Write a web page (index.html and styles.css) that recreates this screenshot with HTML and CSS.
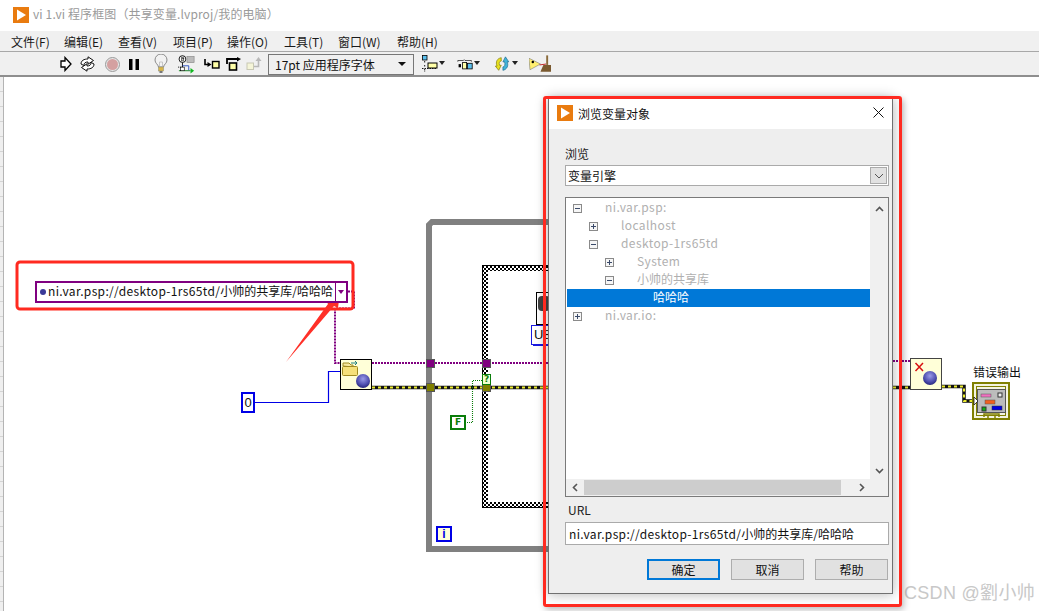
FILE: index.html
```html
<!DOCTYPE html>
<html lang="zh">
<head>
<meta charset="utf-8">
<title>vi 1.vi 程序框图</title>
<link rel="stylesheet" href="styles.css">
</head>
<body>
<div class="window">
  <header class="titlebar">
    <svg class="app-icon" viewBox="0 0 16 16"><rect width="16" height="16" fill="#e97b0f"/><path d="M4 2.500 13 8 4 13.500z" fill="#fff"/></svg>
    <span class="title-text">vi 1.vi 程序框图（共享变量.lvproj/我的电脑）</span>
  </header>
  <nav class="menubar">
    <span class="menu-item">文件(F)</span><span class="menu-item">编辑(E)</span><span class="menu-item">查看(V)</span><span class="menu-item">项目(P)</span><span class="menu-item">操作(O)</span><span class="menu-item">工具(T)</span><span class="menu-item">窗口(W)</span><span class="menu-item">帮助(H)</span>
  </nav>
  <div class="toolbar">
    <svg class="tool t-run" width="12" height="16" viewBox="0 0 12 16"><path d="M1 5h4V1.500L11 8l-6 6.500V11H1z" fill="#fff" stroke="#000" stroke-width="1.300"/></svg>
    <svg class="tool t-cont" width="17" height="16" viewBox="0 0 17 16"><path d="M2 8C2 4.500 5 3 9 3V.8L14.500 4.500 9 8.200V6C6.500 6 5 6.800 4.800 9.500z" fill="#fff" stroke="#111"/><path d="M15 8c0 3.500-3 5-7 5v2.200L2.500 11.500 8 7.800V10c2.500 0 4-.8 4.200-3.500z" fill="#fff" stroke="#111"/></svg>
    <svg class="tool t-abort" width="15" height="15" viewBox="0 0 15 15"><circle cx="7.500" cy="7.500" r="7" fill="#e6e6e6" stroke="#9a9a9a"/><circle cx="7.500" cy="7.500" r="5.500" fill="#d4a0a0"/></svg>
    <svg class="tool t-pause" width="10" height="12" viewBox="0 0 10 12"><rect x="0" y="1" width="3.500" height="11"/><rect x="6.500" y="1" width="3.500" height="11"/></svg>
    <svg class="tool t-bulb" width="14" height="20" viewBox="0 0 14 20"><path d="M4.500 13C4 10 1 9.500 1 6a6 6 0 0 1 12 0c0 3.500-3 4-3.500 7z" fill="#f2f2f2" stroke="#8a8a8a"/><path d="M5.500 13h3V8h-3z" fill="none" stroke="#b5b5b5" stroke-width=".7"/><rect x="4.500" y="13" width="5" height="4" fill="#d9b648" stroke="#887" stroke-width=".5"/><rect x="5.500" y="17" width="3" height="2" fill="#777"/></svg>
    <svg class="tool t-retain" width="17" height="20" viewBox="0 0 19 21"><circle cx="5" cy="5" r="3.800" fill="#fff" stroke="#000"/><path d="M4 3h2v4h-2zM4.500 4.500H7" fill="none" stroke="#000" stroke-width=".7"/><rect x="10" y="2" width="8" height="7" fill="#bbb" stroke="#888" stroke-width=".7"/><path d="M5 9v6" stroke="#000"/><path d="M0 14h5" stroke="#000" stroke-dasharray="1 1"/><path d="M1 18h13" stroke="#0a7d15"/><path d="M5 12.500h7v5" stroke="#224ac0" fill="none"/><rect x="3" y="14" width="4" height="4" fill="#fff" stroke="#000" stroke-width=".7"/><path d="M14 15l4 3-4 3z" fill="#10b820"/></svg>
    <svg class="tool t-into" width="16" height="11" viewBox="0 0 16 11"><path d="M1 0v5.500h4" fill="none" stroke="#000" stroke-width="1.600"/><path d="M3.500 3l4 2.500-4 2.500z"/><rect x="8.500" y="2.500" width="6.500" height="6.500" fill="#ffffa8" stroke="#000" stroke-width="1.400"/></svg>
    <svg class="tool t-over" width="16" height="15" viewBox="0 0 16 15"><path d="M1 7V2h10" fill="none" stroke="#000" stroke-width="1.800"/><path d="M11 0l4 2-4 2.500z"/><rect x="3.500" y="6" width="7" height="7" fill="#ffffa8" stroke="#000" stroke-width="1.600"/></svg>
    <svg class="tool t-out" width="16" height="14" viewBox="0 0 16 14"><rect x="1" y="6" width="6.500" height="6.500" fill="#f5f5d8" stroke="#c8c8b4"/><path d="M8 9.500h4.500V3" fill="none" stroke="#b8b8b8" stroke-width="1.600"/><path d="M9.500 4l3-4 3 4z" fill="#b8b8b8"/></svg>
    <div class="font-select"><span>17pt 应用程序字体</span><i class="arrow-black"></i></div>
    <span class="tool-group t-align"><svg width="16" height="18" viewBox="0 0 16 18"><rect x=".5" y=".5" width="4.500" height="4.500" fill="#5cc0ee" stroke="#000" stroke-width=".8"/><path d="M2.700 6v2M2.700 10v2M2.700 14v3M0 13.500h15" stroke="#000" stroke-width=".9" stroke-dasharray="1.500 1"/><rect x="6" y="8" width="9" height="5" fill="#ffffa8" stroke="#000"/></svg><i class="arrow-small"></i></span>
    <span class="tool-group t-dist"><svg width="16" height="13" viewBox="0 0 20 15"><path d="M1 4V2.500h7l1-1 1 1h8V4" fill="none" stroke="#000" stroke-width=".8"/><rect x="2" y="7" width="3" height="4" fill="#000"/><rect x="7" y="5" width="5" height="8" fill="#ffffa8" stroke="#000"/><rect x="13" y="6" width="6" height="7" fill="#5cc0ee" stroke="#000"/></svg><i class="arrow-small"></i></span>
    <span class="tool-group t-order"><svg width="17" height="16" viewBox="0 0 19 19"><path d="M8 2C3 3 1 7 3 12l-2 0 4 5 3-6H6C5 8 6 6 8 6z" fill="#e8e020" stroke="#807a00" stroke-width=".8"/><path d="M10 17c5-1 7-6 5-10h2l-4-6-3 6h2c1 3 0 6-2 6z" fill="#42b4d8" stroke="#1a6a90" stroke-width=".8"/></svg><i class="arrow-small"></i></span>
    <svg class="tool t-clean" width="22" height="18" viewBox="0 0 23 18"><path d="M0 3 12 9 1 15z" fill="#ffef70" stroke="#777" stroke-width=".6"/><circle cx="4" cy="7" r="1.300" fill="#000"/><path d="M11 10l7-1" stroke="#c02020"/><path d="M18 0h2v10h-2z" fill="#8a6a3a"/><path d="M12 17l3-7h8v7z" fill="#7a5a30"/></svg>
  </div>

  <main class="diagram">
    <div class="ruler"></div>
    <svg class="wires" width="1039" height="534" viewBox="0 77 1039 534">
      <defs>
        <pattern id="hatch" width="4" height="4" patternUnits="userSpaceOnUse"><rect width="4" height="4" fill="#fff"/><rect width="2" height="2" fill="#000"/><rect x="2" y="2" width="2" height="2" fill="#000"/></pattern>
        <radialGradient id="ball" cx=".5" cy=".35" r=".7"><stop offset="0" stop-color="#9a9ae8"/><stop offset=".6" stop-color="#5050b0"/><stop offset="1" stop-color="#1e1e70"/></radialGradient>
      </defs>
      <!-- while loop -->
      <path d="M429 549V225l3-3H560M426 549H560" fill="none" stroke="#808080" stroke-width="6"/>
      <!-- flat sequence -->
      <rect x="482" y="265" width="80" height="243" fill="#000"/>
      <rect x="483" y="266" width="80" height="241" fill="url(#hatch)"/>
      <rect x="488" y="271" width="80" height="231" fill="#fff"/>
      <!-- subvi in sequence -->
      <rect x="536.500" y="292.500" width="20" height="32" fill="#fff" stroke="#000"/>
      <rect x="538" y="296" width="12" height="15" rx="4" fill="#444"/>
      <rect x="533.500" y="328.500" width="20" height="17" fill="#fff" stroke="#1a1ae0"/>
      <rect x="531.500" y="325.500" width="20" height="19" fill="#fff" stroke="#1a1ae0"/>
      <!-- purple wire -->
      <path d="M348 291.500h6v17H335V363H340M372 363H560M893 361h17" fill="none" stroke="#800080" stroke-width="2" stroke-dasharray="2 1"/>
      <!-- blue wire -->
      <path d="M254 402.500H328.500V371.500H340" fill="none" stroke="#0000e6" stroke-width="1.200"/>
      <!-- error wire -->
      <path d="M372 387.500H560M893 387.500h17M942 386.500h22v14.500h9" fill="none" stroke="#111" stroke-width="3.500"/>
      <path d="M372 387.500H560M893 387.500h17M942 386.500h22v14.500h9" fill="none" stroke="#ecec30" stroke-width="2" stroke-dasharray="3 3"/>
      <!-- tunnels -->
      <rect x="426.500" y="359.500" width="8" height="8" fill="#800080" stroke="#555"/>
      <rect x="426.500" y="383.500" width="8" height="8" fill="#808000" stroke="#555"/>
      <rect x="482.500" y="359.500" width="8" height="8" fill="#800080" stroke="#555"/>
      <rect x="482.500" y="383.500" width="8" height="8" fill="#808000" stroke="#555"/>
      <!-- false constant wire -->
      <path d="M467 422.500h5.500V380.500h10" fill="none" stroke="#0a7d0a" stroke-width="1.100" stroke-dasharray="1 1"/>
      <rect x="482.500" y="374.500" width="8" height="10" fill="#f2ffd0" stroke="#0a7d0a"/>
      <!-- open node -->
      <rect x="340.500" y="359.500" width="31" height="30" fill="#ffffd8" stroke="#000"/>
      <path d="M343 366v-3h6l2 2h2v2z" fill="#f7e8a0" stroke="#a08a20"/>
      <rect x="342.500" y="366.500" width="15" height="9" rx="1" fill="#f5e07a" stroke="#a08a20"/>
      <path d="M351 363h6m-2-2 2 2-2 2" fill="none" stroke="#208080"/>
      <circle cx="363" cy="381" r="7" fill="url(#ball)"/>
      <!-- close node -->
      <rect x="910.500" y="358.500" width="31" height="31" fill="#ffffd8" stroke="#444"/>
      <path d="M915.500 363l7.500 8m0-8-7.500 8" stroke="#d81010" stroke-width="1.500"/>
      <circle cx="930" cy="378" r="7" fill="url(#ball)"/>
      <!-- error out -->
      <rect x="973" y="383" width="36" height="36" fill="#f4f4e0" stroke="#808000" stroke-width="2"/>
      <rect x="976.500" y="386.500" width="29" height="29" fill="#f4f4e0" stroke="#808000"/>
      <rect x="977.500" y="389.500" width="28" height="23" fill="#bcbcbc" stroke="#555"/>
      <rect x="981" y="394" width="10" height="3" fill="#f070c0" stroke="#555" stroke-width=".5"/>
      <rect x="998" y="393" width="4" height="4" fill="#eee" stroke="#333"/>
      <rect x="985" y="400" width="10" height="4" fill="#f06020" stroke="#555" stroke-width=".5"/>
      <rect x="982" y="407" width="4" height="4" fill="#10b010" stroke="#333"/>
      <rect x="992" y="406" width="10" height="4" fill="#0000e0" stroke="#333" stroke-width=".5"/>
      <path d="M974 397l4 4-4 4z" fill="#fff" stroke="#000" stroke-width=".7"/>
      <path d="M984 417v-3h15v3M988 420v-4M995 420v-4" fill="none" stroke="#808000" stroke-width="1.500"/>
      <!-- annotation -->
      <rect x="17" y="262" width="336" height="47" rx="3" fill="none" stroke="#ff2a20" stroke-width="3"/>
      <path d="M286 362 328 304 325 299 340 292 338 308 334 306z" fill="#ff3028"/>
    </svg>

    <div class="indicator"><i class="dot"></i><span class="indicator-text">ni.var.psp://desktop-1rs65td/<span class="cjk">小帅的共享库/哈哈哈</span></span><span class="indicator-drop"><i></i></span></div>
    <div class="const-zero">0</div>
    <div class="const-false">F</div>
    <div class="query">?</div>
    <div class="loop-i">i</div>
    <div class="u8-label">U8</div>
    <div class="error-label">错误输出</div>

    <section class="highlight"></section>
    <section class="dialog">
      <header class="dialog-title">
        <svg class="app-icon-small" viewBox="0 0 16 16"><rect width="16" height="16" fill="#e97b0f"/><path d="M4 2.500 13 8 4 13.500z" fill="#fff"/></svg>
        <span class="dialog-title-text">浏览变量对象</span>
        <svg class="dialog-close" width="11" height="11" viewBox="0 0 11 11"><path d="M.5.500l10 10m0-10-10 10" stroke="#111" stroke-width="1"/></svg>
      </header>
      <div class="dialog-body">
        <label class="field-label">浏览</label>
        <div class="combo"><span>变量引擎</span><span class="combo-btn"><svg width="10" height="6" viewBox="0 0 10 6"><path d="M1 1l4 4 4-4" fill="none" stroke="#555"/></svg></span></div>
        <div class="tree">
          <div class="tree-rows">
            <div class="row lvl0"><i class="box minus"></i><span class="latin">ni.var.psp:</span></div>
            <div class="row lvl1"><i class="box plus"></i><span class="latin">localhost</span></div>
            <div class="row lvl1"><i class="box minus"></i><span class="latin">desktop-1rs65td</span></div>
            <div class="row lvl2"><i class="box plus"></i><span class="latin">System</span></div>
            <div class="row lvl2"><i class="box minus"></i><span>小帅的共享库</span></div>
            <div class="row selected"><span>哈哈哈</span></div>
            <div class="row lvl0"><i class="box plus"></i><span class="latin">ni.var.io:</span></div>
          </div>
          <div class="vscroll">
            <svg width="9" height="6" viewBox="0 0 9 6"><path d="M1 5l3.500-3.500L8 5" fill="none" stroke="#555" stroke-width="1.600"/></svg>
            <svg width="9" height="6" viewBox="0 0 9 6"><path d="M1 1l3.500 3.500L8 1" fill="none" stroke="#555" stroke-width="1.600"/></svg>
          </div>
          <div class="hscroll">
            <svg width="6" height="9" viewBox="0 0 6 9"><path d="M5 1 1.500 4.500 5 8" fill="none" stroke="#555" stroke-width="1.600"/></svg>
            <div class="thumb"></div>
            <svg width="6" height="9" viewBox="0 0 6 9"><path d="M1 1l3.500 3.500L1 8" fill="none" stroke="#555" stroke-width="1.600"/></svg>
          </div>
        </div>
        <label class="field-label url-label">URL</label>
        <div class="url-input">ni.var.psp://desktop-1rs65td/<span class="cjk">小帅的共享库/哈哈哈</span></div>
        <div class="actions">
          <button class="btn btn-default">确定</button>
          <button class="btn">取消</button>
          <button class="btn">帮助</button>
        </div>
      </div>
    </section>
    <div class="watermark">CSDN @劉小帅</div>
  </main>
</div>
</body>
</html>
```

FILE: styles.css
```css
* { box-sizing: border-box; }
html, body { margin: 0; padding: 0; }
body { width: 1039px; height: 611px; overflow: hidden; background: #fff; font-family: "Noto Sans CJK SC", "Liberation Sans", sans-serif; color: #111; }
.window { width: 1039px; height: 611px; display: flex; flex-direction: column; }
.cjk { letter-spacing: 0; }

.titlebar { height: 31px; display: flex; align-items: center; padding: 0 0 1px 13px; background: #fff; flex: none; }
.app-icon { width: 16px; height: 16px; margin-right: 4px; }
.title-text { font-size: 12px; line-height: 14px; padding-bottom: 3px; color: #9a9a9a; letter-spacing: .12px; }

.menubar { height: 21px; flex: none; display: flex; align-items: center; padding-left: 11px; background: #f0f0f0; border-bottom: 1px solid #a8a8a8; font-size: 12px; }
.menu-item { width: 54px; white-space: nowrap; color: #1a1a1a; }
.menu-item:nth-child(1) { width: 53px; }
.menu-item:nth-child(3) { width: 55px; }
.menu-item:nth-child(5) { width: 57px; }
.menu-item:nth-child(7) { width: 59px; }

.toolbar { height: 25px; flex: none; display: flex; align-items: center; padding: 1px 0 0 60px; background: #f0f0f0; border-bottom: 2px solid #8e8e8e; }
.tool { flex: none; display: block; }
.t-cont { margin-left: 7px; }
.t-abort { margin-left: 9px; }
.t-pause { margin-left: 9px; }
.t-bulb { margin-left: 15px; }
.t-retain { margin-left: 10px; }
.t-into { margin-left: 9px; }
.t-over { margin-left: 6px; }
.t-out { margin-left: 4px; }
.font-select { flex: none; margin-left: 6px; width: 146px; height: 21px; border: 1px solid #777; background: #f0f0f0; display: flex; align-items: center; justify-content: space-between; padding: 0 7px 0 6px; font-size: 12px; }
.arrow-black { width: 0; height: 0; border-left: 4px solid transparent; border-right: 4px solid transparent; border-top: 4px solid #111; }
.tool-group { display: flex; align-items: center; flex: none; }
.arrow-small { width: 0; height: 0; margin: -2px 0 0 1px; border-left: 3.500px solid transparent; border-right: 3.500px solid transparent; border-top: 4px solid #222; }
.t-align { margin-left: 8px; }
.t-dist { margin-left: 12px; }
.t-order { margin-left: 14px; }
.t-clean { margin-left: 11px; }

.diagram { flex: 1; position: relative; background: #fff; overflow: hidden; }
.ruler { position: absolute; left: 0; top: 0; bottom: 0; width: 4px; background: repeating-linear-gradient(#efefef 0 14px, #d4d4d4 14px 15px); border-right: 1px solid #b4b4b4; }
.wires { position: absolute; left: 0; top: 0; display: block; }

.indicator { position: absolute; left: 35px; top: 204px; width: 313px; height: 22px; border: 2px solid #800080; background: #fff; display: flex; align-items: center; font-size: 12px; }
.dot { width: 6px; height: 6px; border-radius: 50%; background: #3a3a98; margin: 0 2px 0 3px; flex: none; }
.indicator-text { flex: 1; white-space: nowrap; line-height: 14px; padding-bottom: 2px; letter-spacing: .34px; color: #111; }
.indicator-drop { width: 11px; height: 100%; border-left: 1px solid #800080; display: flex; align-items: center; justify-content: center; flex: none; }
.indicator-drop i { border-left: 3.500px solid transparent; border-right: 3.500px solid transparent; border-top: 4px solid #800080; }

.const-zero { position: absolute; left: 241px; top: 315px; width: 14px; height: 21px; border: 2px solid #0000e6; background: #fff; font: 13px/17px "Liberation Sans", sans-serif; text-align: center; }
.const-false { position: absolute; left: 450px; top: 338px; width: 16px; height: 15px; border: 2px solid #0a7d0a; background: #fff; color: #0a7d0a; font: bold 9px/11px "DejaVu Sans", sans-serif; text-align: center; }
.query { position: absolute; left: 482px; top: 297px; width: 9px; font: bold 9px/11px "DejaVu Sans", sans-serif; color: #0a7d0a; text-align: center; }
.loop-i { position: absolute; left: 436px; top: 449px; width: 16px; height: 16px; border: 2px solid #0000e6; background: #ffffd8; color: #0000e6; font: bold 12px/12px "Liberation Sans", sans-serif; text-align: center; }
.u8-label { position: absolute; left: 534px; top: 250px; width: 16px; font: 13px/16px "Liberation Sans", sans-serif; color: #111; white-space: nowrap; overflow: hidden; }
.error-label { position: absolute; left: 973px; top: 287px; font-size: 12px; line-height: 16px; color: #111; white-space: nowrap; }

.highlight { position: absolute; left: 543px; top: 19px; width: 359px; height: 511px; border: 3px solid #ff2a20; border-radius: 3px; z-index: 3; pointer-events: none; box-shadow: 2px 3px 6px rgba(0,0,0,.25); }
.dialog { position: absolute; left: 548px; top: 21px; width: 345px; height: 496px; background: #eeeeee; border: 1px solid #707070; border-top: 0; display: flex; flex-direction: column; box-shadow: 0 0 12px rgba(0,0,0,.3); z-index: 2; }
.dialog-title { height: 31px; flex: none; background: #fff; display: flex; align-items: center; padding: 0 8px 1px 8px; }
.app-icon-small { width: 16px; height: 16px; margin-right: 5px; flex: none; }
.dialog-title-text { flex: 1; font-size: 12px; color: #111; }
.dialog-close { margin-top: -2px; }
.dialog-body { flex: 1; display: flex; flex-direction: column; padding: 16px 3px 0 16px; }
.field-label { font-size: 12px; line-height: 18px; color: #222; height: 18px; flex: none; }
.combo { height: 21px; flex: none; margin-top: 2px; background: #fff; border: 1px solid #aaa; display: flex; align-items: center; justify-content: space-between; padding: 0 1px 0 2px; font-size: 12px; color: #111; }
.combo-btn { width: 17px; height: 17px; background: #e1e1e1; border: 1px solid #aaa; display: flex; align-items: center; justify-content: center; }
.tree { margin-top: 11px; height: 300px; flex: none; background: #fff; border: 1px solid #7a7a7a; display: grid; grid-template-columns: 1fr 18px; grid-template-rows: 1fr 17px; }
.tree-rows { padding: 1px 0 0 1px; }
.row { height: 18px; display: flex; align-items: center; font: 12px/16px "Noto Sans CJK SC", "Noto Sans", sans-serif; color: #b0b0b0; white-space: nowrap; }
.row span { padding-bottom: 2px; }
.latin { letter-spacing: .4px; }
.lvl0 { padding-left: 6px; }
.lvl1 { padding-left: 22px; }
.lvl2 { padding-left: 38px; }
.box { width: 9px; height: 9px; flex: none; margin-right: 23px; border: 1px solid #8a8a8a; background: linear-gradient(#3a4a6a,#3a4a6a) center/5px 1px no-repeat, #f6f6f6; }
.plus { background: linear-gradient(#3a4a6a,#3a4a6a) center/5px 1px no-repeat, linear-gradient(#3a4a6a,#3a4a6a) center/1px 5px no-repeat, #f6f6f6; }
.selected { background: #0078d7; color: #fff; padding-left: 86px; }
.vscroll { background: #f0f0f0; display: flex; flex-direction: column; justify-content: space-between; align-items: center; padding: 8px 0 5px; }
.hscroll { grid-column: 1 / 3; background: #f0f0f0; display: flex; align-items: center; padding-left: 6px; }
.hscroll svg { flex: none; }
.thumb { width: 257px; height: 15px; margin: 0 18px 0 6px; background: #cdcdcd; flex: none; }
.url-label { margin: 4px 0 3px 3px; }
.url-input { height: 23px; flex: none; background: #fff; border: 1px solid #aaa; padding-left: 3px; font-size: 12px; line-height: 21px; white-space: nowrap; color: #111; letter-spacing: .34px; }
.actions { margin-top: 14px; display: flex; justify-content: flex-end; gap: 11px; padding-right: 1px; }
.btn { width: 73px; height: 21px; padding: 0; background: #e1e1e1; border: 1px solid #adadad; font: 12px/18px "Noto Sans CJK SC", sans-serif; color: #111; }
.btn-default { border: 2px solid #0078d7; }

.watermark { position: absolute; left: 904px; top: 504px; font: 18px/24px "Liberation Sans", "Noto Sans CJK SC", sans-serif; color: #c8c8c8; white-space: nowrap; letter-spacing: .3px; }
```
